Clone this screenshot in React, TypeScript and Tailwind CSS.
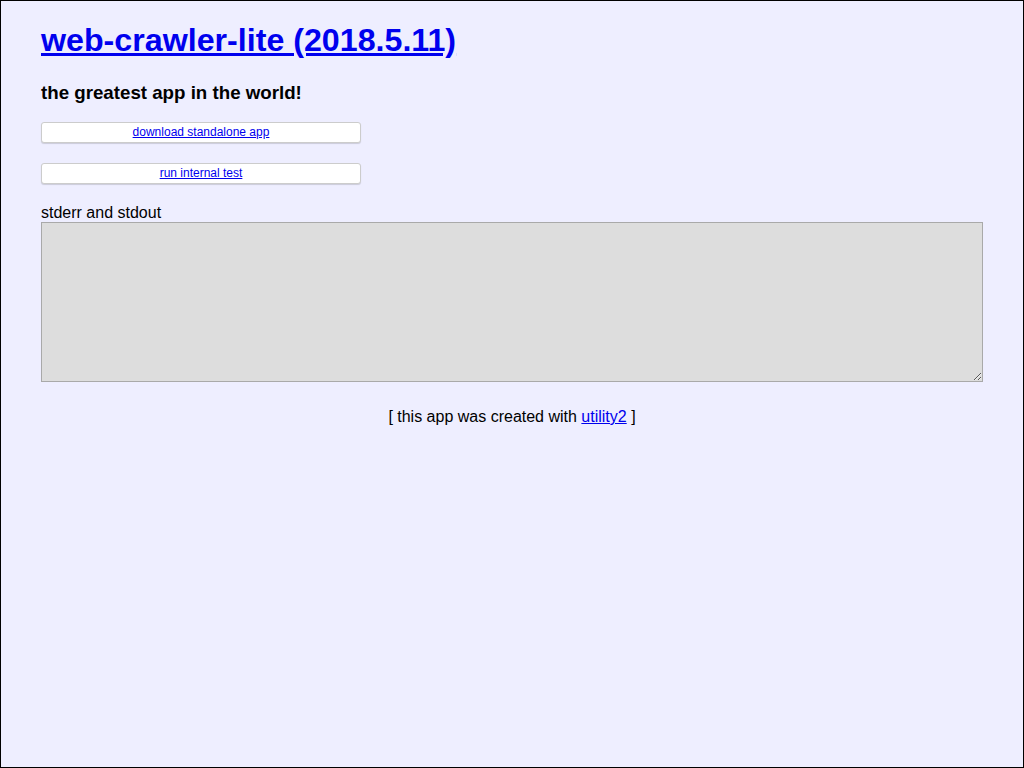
import React from 'react';

const buttons = ['download standalone app', 'run internal test'];

export default function App() {
  return (
    <div className="h-[768px] w-[1024px] overflow-hidden border border-black bg-[#eeeeff] px-[40px] font-['Liberation_Sans',Arial,sans-serif] text-black">
      {/* header */}
      <h1 className="mt-[21px] text-[32.2px] font-bold leading-[37px]">
        <a href="#" className="text-[#0000ee] underline">web-crawler-lite (2018.5.11)</a>
      </h1>
      <h3 className="mt-[23px] text-[18.72px] font-bold leading-[22px]">the greatest app in the world!</h3>

      {/* actions */}
      <div className="mt-[18px] flex flex-col gap-[20px]">
        {buttons.map((label) => (
          <div
            key={label}
            className="flex h-[21px] w-[320px] items-center justify-center rounded-[3px] border border-[#cccccc] bg-white pb-[2px] shadow-[0_1px_1px_rgba(0,0,0,0.15)]"
          >
            <a href="#" className="text-[12px] leading-[14px] text-[#0000ee] underline">{label}</a>
          </div>
        ))}
      </div>

      {/* output */}
      <div className="mt-[20px] text-[16px] leading-[18px]">stderr and stdout</div>
      <textarea
        readOnly
        className="block h-[160px] w-full resize-y border border-[#a9a9a9] bg-[#dddddd] p-[2px] font-mono text-[12px] outline-none"
      />

      {/* footer */}
      <div className="mt-[26px] text-center text-[16px] leading-[18px]">
        [ this app was created with <a href="#" className="text-[#0000ee] underline">utility2</a> ]
      </div>
    </div>
  );
}
